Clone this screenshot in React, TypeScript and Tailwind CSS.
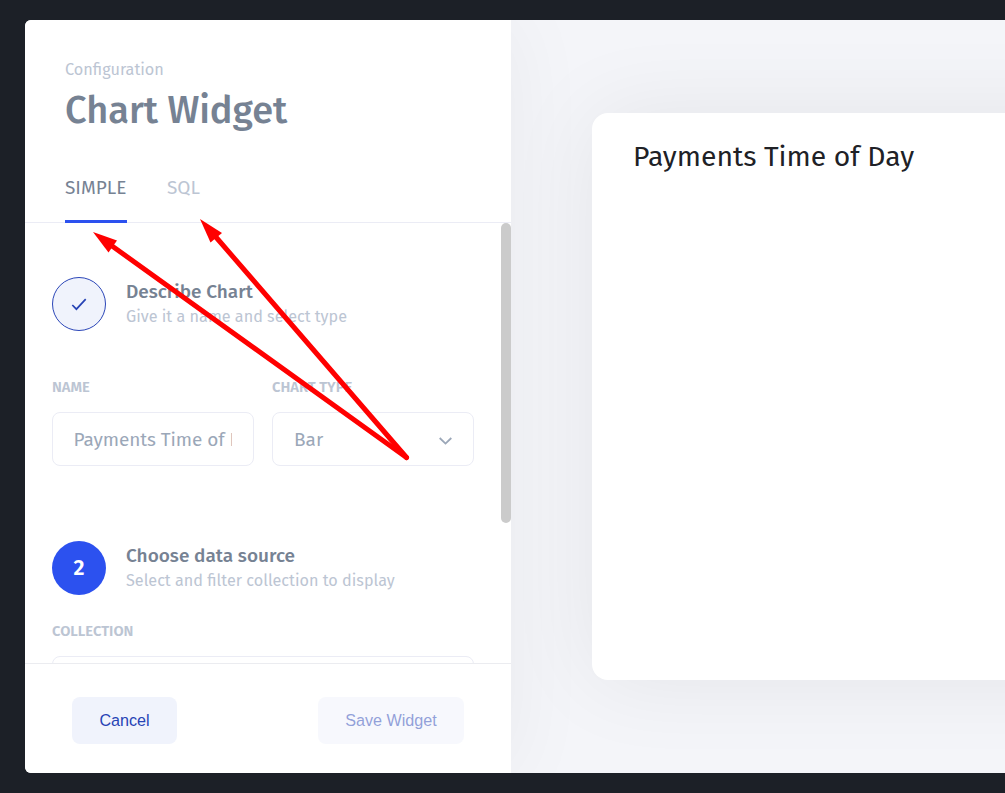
import React from "react";

function Step({ badge, done, title, text }: {
  badge: React.ReactNode;
  done?: boolean;
  title: string;
  text: string;
}) {
  return (
    <div className="flex h-[54px] items-center gap-5">
      <div
        className={
          done
            ? "flex size-[54px] shrink-0 items-center justify-center rounded-full border border-[#2b46b8] bg-[#f0f3fc] text-[#2743b5]"
            : "flex size-[54px] shrink-0 items-center justify-center rounded-full bg-[#2c51ef] text-[21.500px] font-semibold text-white"
        }
      >
        {badge}
      </div>
      <div className="whitespace-nowrap">
        <div className="h-[25px] text-[19px] leading-[23px] font-medium text-[#768293]">{title}</div>
        <div className="text-[16.200px] leading-6 text-[#bcc5d3]">{text}</div>
      </div>
    </div>
  );
}

function Label({ children }: { children: string }) {
  return <span className="block h-5 text-[14.750px] leading-5 font-semibold whitespace-nowrap text-[#bcc5d3]">{children}</span>;
}

function Arrows() {
  return (
    <svg className="pointer-events-none absolute top-0 left-0 z-20" width="1005" height="793" fill="none">
      <g stroke="#ff0000" strokeWidth="5" strokeLinecap="round">
        <path d="M406.500 457.500L110 244.500" />
        <path d="M406.500 457.500L215 236" />
      </g>
      <g fill="#ff0000">
        <path d="M93 232L117 240.500L108.500 252.500Z" />
        <path d="M200 219L222 233L210.500 242.500Z" />
      </g>
    </svg>
  );
}

export default function App() {
  return (
    <div className="relative h-[793px] w-[1005px] overflow-hidden bg-[#1c2027] py-5 pl-[25px] font-['Fira_Sans','Noto_Sans',sans-serif]">
      <div className="flex h-[753px] w-[980px] overflow-hidden rounded-l-md bg-[#f4f5f9]">
        <aside className="z-10 flex w-[486px] shrink-0 flex-col bg-white shadow-[0_0_80px_rgba(0,0,0,0.05)]">
          <header className="h-[203px] border-b border-[#ebecf5] pt-9 pl-10">
            <div className="h-6 text-[16.250px] leading-[27px] text-[#bcc5d3]">Configuration</div>
            <h1 className="h-[60px] text-[38px] leading-[60px] font-medium tracking-[-0.050px] text-[#768293]">Chart Widget</h1>
            <nav className="mt-7 flex h-[55px] gap-10 text-[19px] leading-[39px] whitespace-nowrap">
              <span className="h-[55px] w-[62px] border-b-[3px] border-[#2c51ef] text-[#768293]">SIMPLE</span>
              <span className="text-[#bcc5d3]">SQL</span>
            </nav>
          </header>
          <div className="flex h-[440px] justify-between overflow-hidden">
            <div className="w-[449px] pt-[54px] pl-[27px]">
              <Step
                done
                badge={<svg width="16" height="16" viewBox="0 0 16 16" fill="none" stroke="currentColor" strokeWidth="1.7"><path d="M1.300 9L5.400 13.200L14.700 3.200" /></svg>}
                title="Describe Chart"
                text="Give it a name and select type"
              />
              <div className="mt-[46px] flex gap-[18px]">
                <div className="w-[202px]">
                  <Label>NAME</Label>
                  <div className="mt-[15px] flex h-[54px] items-center rounded-lg border border-[#ebecf5] px-[20.500px]">
                    <div className="w-[158px] overflow-hidden pt-0.5 text-[19px] tracking-[-0.070px] whitespace-nowrap text-[#9ba7b8]">Payments Time of Day</div>
                  </div>
                </div>
                <div className="w-[202px]">
                  <Label>CHART TYPE</Label>
                  <div className="mt-[15px] flex h-[54px] items-center justify-between rounded-lg border border-[#ebecf5] px-[21px] text-[19px] text-[#9ba7b8]">
                    <span className="pt-0.5">Bar</span>
                    <svg width="13" height="8" viewBox="0 0 13 8" className="mt-1" fill="none" stroke="currentColor" strokeWidth="1.8"><path d="M.7 1L6.500 6.600L12.300 1" /></svg>
                  </div>
                </div>
              </div>
              <div className="mt-[75px]">
                <Step badge="2" title="Choose data source" text="Select and filter collection to display" />
              </div>
              <div className="mt-[26px]">
                <Label>COLLECTION</Label>
                <div className="mt-[15px] h-[54px] rounded-lg border border-[#ebecf5]" />
              </div>
            </div>
            <div className="h-[300px] w-2.5 rounded-full bg-[#cbcbcb]" />
          </div>
          <footer className="flex h-[110px] items-start justify-between border-t border-[#ebecf0] pt-[33px] pr-[47px] pl-[47px] font-['Liberation_Sans',sans-serif] text-[16.150px]">
            <button className="h-[47px] w-[105px] rounded-lg bg-[#f0f3fc] text-[#2743b5]">Cancel</button>
            <button className="h-[47px] w-[146px] rounded-lg bg-[#f0f3fc] text-[#2743b5] opacity-50">Save Widget</button>
          </footer>
        </aside>
        <main className="w-[494px] pt-[93px] pl-[81px]">
          <section className="h-[567px] w-[600px] rounded-2xl bg-white pt-[25px] pl-[41px] shadow-[0_0_90px_rgba(0,0,0,0.07)]">
            <h2 className="text-[28.300px] leading-[38px] font-normal whitespace-nowrap text-[#202126]">Payments Time of Day</h2>
          </section>
        </main>
      </div>
      <Arrows />
    </div>
  );
}
